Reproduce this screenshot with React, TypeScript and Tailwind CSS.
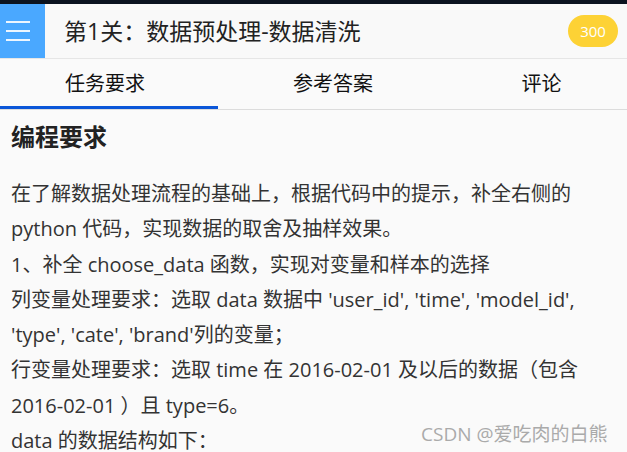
import React from 'react';

const tabs = [
  { name: '任务要求', width: 'w-[218px]', active: true },
  { name: '参考答案', width: 'w-[230px]', active: false },
  { name: '评论', width: 'flex-1 pl-[8px]', active: false },
];

const lines = [
  '在了解数据处理流程的基础上，根据代码中的提示，补全右侧的',
  'python 代码，实现数据的取舍及抽样效果。',
  '1、补全 choose_data 函数，实现对变量和样本的选择',
  "列变量处理要求：选取 data 数据中 'user_id', 'time', 'model_id',",
  "'type', 'cate', 'brand'列的变量；",
  '行变量处理要求：选取 time 在 2016-02-01 及以后的数据（包含',
  '2016-02-01 ）且 type=6。',
  'data 的数据结构如下：',
];

const App: React.FC = () => {
  return (
    <div
      className="relative w-[627px] h-[452px] overflow-hidden bg-[#fafafa] text-[#333]"
      style={{ fontFamily: '"Open Sans", "Noto Sans CJK SC", sans-serif' }}
    >
      <div className="h-[4px] bg-[#0b1320]" />
      {/* header */}
      <div className="flex items-center h-[55px] bg-[#f9f9f9] border-b border-[#e6e6e6]">
        <div className="w-[45px] h-full bg-[#4aa8ff] flex flex-col justify-center gap-[7px] pl-[6px]">
          <div className="w-[24px] h-[2px] bg-white/90" />
          <div className="w-[24px] h-[2px] bg-white/90" />
          <div className="w-[24px] h-[2px] bg-white/90" />
        </div>
        <div className="ml-[19px] text-[23px] text-[#222] flex-1">第1关：数据预处理-数据清洗</div>
        <div className="mr-[9px] w-[50px] h-[32px] rounded-full bg-[#fdd235] text-white text-[15px] flex items-center justify-center">
          300
        </div>
      </div>
      {/* tabs */}
      <div className="flex h-[51px] border-b border-[#dcdcdc]">
        {tabs.map(t => (
          <div
            key={t.name}
            className={`${t.width} flex items-center justify-center text-[20px] text-[#111] ${t.active ? 'border-b-[3px] border-[#0b56d8] pt-[3px] pr-[8px]' : ''}`}
          >
            {t.name}
          </div>
        ))}
      </div>
      {/* content */}
      <div className="px-[11px] pt-[9px]">
        <h2 className="text-[24px] font-bold leading-[36px] text-[#222]">编程要求</h2>
        <div className="mt-[21px] text-[20px] leading-[35.3px] text-[#333]">
          {lines.map((l, i) => (
            <div key={i} className="whitespace-nowrap">{l}</div>
          ))}
        </div>
      </div>
      <div className="absolute left-[421px] top-[420px] text-[19px] text-[#aaa] whitespace-nowrap">
        CSDN @爱吃肉的白熊
      </div>
    </div>
  );
};

export default App;
